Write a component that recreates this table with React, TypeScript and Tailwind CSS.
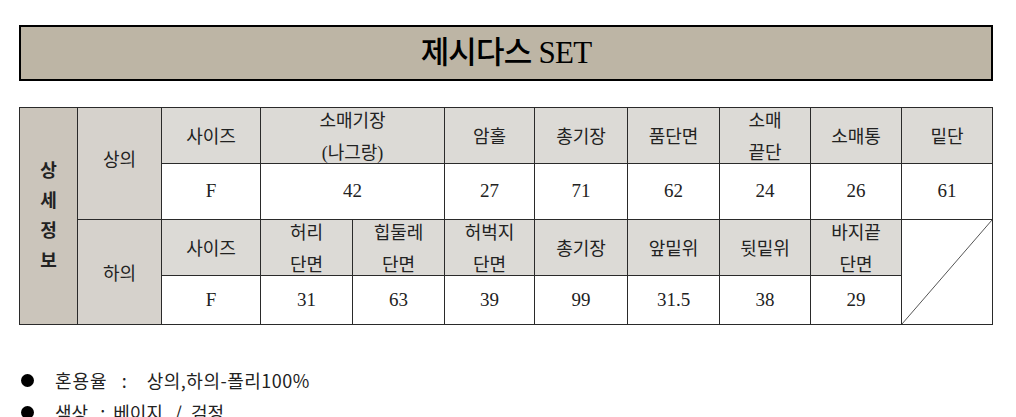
const CELL_FONT = { fontFamily: '"Liberation Serif", "Noto Sans CJK KR", serif' }
const KR_FONT = { fontFamily: '"Noto Sans CJK KR", "Noto Sans", sans-serif' }

const head = 'flex items-center justify-center bg-[#dcdad6] pt-[2px] text-center text-[18px] leading-[32px] text-[#222]'
const body = 'flex items-center justify-center bg-white text-center text-[19px] text-[#222]'

export default function App() {
  return (
    <div className="min-h-screen bg-white px-[19px] pt-[25px]">
      <div className="flex h-[56px] w-[974px] items-center justify-center border-2 border-black bg-[#bdb5a5]">
        <h1 className="text-[31px] font-medium tracking-tight text-black" style={CELL_FONT}>
          제시다스 SET
        </h1>
      </div>

      <div
        className="mt-[26px] grid w-[974px] grid-cols-[57px_83px_98px_91px_91px_89px_92px_91px_90px_90px_90px] grid-rows-[55px_55px_55px_48px] gap-px bg-[#2a2a2a] p-px"
        style={CELL_FONT}
      >
        <div className="col-start-1 row-span-4 row-start-1 flex flex-col items-center justify-center bg-[#cbc5bb] text-[18px] font-bold leading-[30px] text-[#222]">
          <span>상</span>
          <span>세</span>
          <span>정</span>
          <span>보</span>
        </div>
        <div className="col-start-2 row-span-2 row-start-1 flex items-center justify-center bg-[#d6d2cc] pb-[6px] text-[18px] text-[#222]">
          상의
        </div>
        <div className="col-start-2 row-span-2 row-start-3 flex items-center justify-center bg-[#d6d2cc] pt-[4px] text-[18px] text-[#222]">
          하의
        </div>

        {/* 상의 header */}
        <div className={head}>사이즈</div>
        <div className={`${head} col-span-2`}>
          소매기장
          <br />
          (나그랑)
        </div>
        <div className={head}>암홀</div>
        <div className={head}>총기장</div>
        <div className={head}>품단면</div>
        <div className={head}>
          소매
          <br />
          끝단
        </div>
        <div className={head}>소매통</div>
        <div className={head}>밑단</div>

        {/* 상의 values */}
        <div className={body}>F</div>
        <div className={`${body} col-span-2`}>42</div>
        <div className={body}>27</div>
        <div className={body}>71</div>
        <div className={body}>62</div>
        <div className={body}>24</div>
        <div className={body}>26</div>
        <div className={body}>61</div>

        {/* 하의 header */}
        <div className={head}>사이즈</div>
        <div className={head}>
          허리
          <br />
          단면
        </div>
        <div className={head}>
          힙둘레
          <br />
          단면
        </div>
        <div className={head}>
          허벅지
          <br />
          단면
        </div>
        <div className={head}>총기장</div>
        <div className={head}>앞밑위</div>
        <div className={head}>뒷밑위</div>
        <div className={head}>
          바지끝
          <br />
          단면
        </div>
        <div className="relative col-start-11 row-span-2 row-start-3 bg-white">
          <svg className="absolute inset-0 h-full w-full" preserveAspectRatio="none" viewBox="0 0 100 100">
            <line x1="0" y1="100" x2="100" y2="0" stroke="#555" strokeWidth="1" vectorEffect="non-scaling-stroke" />
          </svg>
        </div>

        {/* 하의 values */}
        <div className={body}>F</div>
        <div className={body}>31</div>
        <div className={body}>63</div>
        <div className={body}>39</div>
        <div className={body}>99</div>
        <div className={body}>31.5</div>
        <div className={body}>38</div>
        <div className={body}>29</div>
      </div>

      <ul className="mt-[39px] text-[18px] leading-[32px] text-[#222]" style={KR_FONT}>
        <li className="flex items-center">
          <span className="ml-[2px] h-[13px] w-[13px] rounded-full bg-black" />
          <span className="ml-[21px] tracking-[1px]">혼용율</span>
          <span className="ml-[14px]">:</span>
          <span className="ml-[20px] tracking-[0.5px]">상의,하의-폴리100%</span>
        </li>
        <li className="flex items-center">
          <span className="ml-[2px] h-[13px] w-[13px] rounded-full bg-black" />
          <span className="ml-[21px]">색상</span>
          <span className="ml-[12px]">:</span>
          <span className="ml-[8px]">베이지</span>
          <span className="ml-[12px]">/</span>
          <span className="ml-[9px]">검정</span>
        </li>
      </ul>
    </div>
  )
}
